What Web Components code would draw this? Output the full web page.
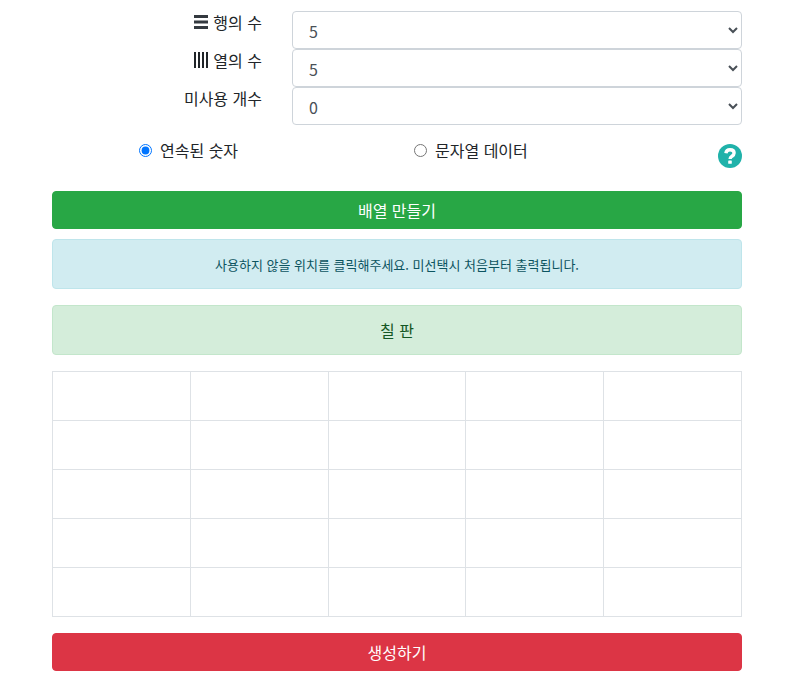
<!DOCTYPE html>
<html lang="ko">
<head>
<meta charset="utf-8">
<title>배열 만들기</title>
<style>
  html, body { margin: 0; background: #fff; }
  body {
    font-family: "Noto Sans CJK KR", "Noto Sans", sans-serif;
    font-size: 16px;
    color: #212529;
  }
</style>
</head>
<body>
<seat-page></seat-page>

<script>
const ICONS = {
  rows: `<svg width="14" height="14" viewBox="0 0 14 14"><path fill="#343a40" d="M0 0h14v3H0zM0 5.5h14v3H0zM0 11h14v3H0z"/></svg>`,
  cols: `<svg width="14" height="16" viewBox="0 0 14 16"><path fill="#212529" d="M0 0h2v16H0zM4 0h2v16H4zM8 0h2v16H8zM12 0h2v16h-2z"/></svg>`,
  help: `<svg width="24" height="24" viewBox="0 0 24 24"><circle cx="12" cy="12" r="12" fill="#20b2aa"/><path fill="none" stroke="#fff" stroke-width="3.4" d="M7.9 9.3c.3-2.300 1.900-3.500 4.100-3.500 2.400 0 4.100 1.300 4.100 3.300 0 1.500-.8 2.300-2.100 3.100-1.200.8-1.900 1.400-1.900 2.900"/><rect x="10.200" y="16.400" width="3.600" height="3.400" rx=".6" fill="#fff"/></svg>`,
};

class FormRow extends HTMLElement {
  constructor() {
    super();
    const root = this.attachShadow({ mode: 'open' });
    const value = this.getAttribute('value') || '0';
    root.innerHTML = `
      <style>
        :host { display: grid; grid-template-columns: 210px 450px; column-gap: 30px; }
        .label {
          display: flex; justify-content: flex-end; align-items: center; gap: 5px;
          height: 22px; margin-top: 0; line-height: 22px;
        }
        select {
          display: block; width: 100%; height: 38px; box-sizing: border-box;
          padding: 6px 12px; font: inherit; color: #495057; background: #fff;
          border: 1px solid #ced4da; border-radius: 4px;
        }
      </style>
      <div class="label"><slot name="icon"></slot><slot></slot></div>
      <select aria-label="${this.textContent.trim()}"><option>${value}</option></select>
    `;
  }
}

class RadioOption extends HTMLElement {
  constructor() {
    super();
    const root = this.attachShadow({ mode: 'open' });
    const checked = this.hasAttribute('checked') ? 'checked' : '';
    root.innerHTML = `
      <style>
        :host { display: flex; align-items: center; height: 24px; }
        input { width: 13px; height: 13px; margin: 0 8px 0 0; flex: none; }
      </style>
      <input type="radio" name="kind" ${checked}><slot></slot>
    `;
  }
}

class AlertBox extends HTMLElement {
  constructor() {
    super();
    const root = this.attachShadow({ mode: 'open' });
    root.innerHTML = `
      <style>
        :host {
          display: flex; align-items: center; justify-content: center;
          box-sizing: border-box; height: 50px; border: 1px solid transparent; border-radius: 4px;
        }
        :host([kind="info"]) { background: #d1ecf1; border-color: #bee5eb; color: #0c5460; font-size: 13px; }
        :host([kind="success"]) { background: #d4edda; border-color: #c3e6cb; color: #155724; font-size: 16px; }
      </style>
      <slot></slot>
    `;
  }
}

class ActionButton extends HTMLElement {
  constructor() {
    super();
    const root = this.attachShadow({ mode: 'open' });
    root.innerHTML = `
      <style>
        :host { display: block; }
        button {
          display: block; width: 100%; height: 38px; padding: 0; border: 1px solid transparent;
          border-radius: 4px; font: inherit; color: #fff;
        }
        :host([kind="success"]) button { background: #28a745; border-color: #28a745; }
        :host([kind="danger"]) button { background: #dc3545; border-color: #dc3545; }
      </style>
      <button type="button"><slot></slot></button>
    `;
  }
}

class SeatGrid extends HTMLElement {
  constructor() {
    super();
    const root = this.attachShadow({ mode: 'open' });
    const rows = Number(this.getAttribute('rows'));
    const cols = Number(this.getAttribute('cols'));
    const row = `<tr>${'<td></td>'.repeat(cols)}</tr>`;
    root.innerHTML = `
      <style>
        :host { display: block; }
        table { width: 690px; border-collapse: collapse; table-layout: fixed; }
        td { height: 49px; box-sizing: border-box; padding: 0; border: 1px solid #dee2e6; }
      </style>
      <table>${row.repeat(rows)}</table>
    `;
  }
}

class SeatPage extends HTMLElement {
  constructor() {
    super();
    const root = this.attachShadow({ mode: 'open' });
    root.innerHTML = `
      <style>
        :host { display: block; width: 690px; margin-left: 52px; padding-top: 11px; }
        .radios { display: grid; grid-template-columns: 275px 308px 1fr; margin: 13px 0 0 87px; height: 40px; align-items: start; }
        .help { width: 24px; height: 24px; margin: 6px 0 0 -4px; display: block; }
        .stack-1 { margin-top: 13px; }
        .gap-10 { margin-top: 10px; }
        .gap-16 { margin-top: 16px; }
        svg { display: block; }
      </style>
      <form-row value="5"><span slot="icon">${ICONS.rows}</span>행의 수</form-row>
      <form-row value="5"><span slot="icon">${ICONS.cols}</span>열의 수</form-row>
      <form-row value="0">미사용 개수</form-row>
      <div class="radios">
        <radio-option checked>연속된 숫자</radio-option>
        <radio-option>문자열 데이터</radio-option>
        <span class="help">${ICONS.help}</span>
      </div>
      <action-button class="stack-1" kind="success">배열 만들기</action-button>
      <alert-box class="gap-10" kind="info">사용하지 않을 위치를 클릭해주세요. 미선택시 처음부터 출력됩니다.</alert-box>
      <alert-box class="gap-16" kind="success">칠 판</alert-box>
      <seat-grid class="gap-16" rows="5" cols="5"></seat-grid>
      <action-button class="gap-16" kind="danger">생성하기</action-button>
    `;
  }
}

customElements.define('form-row', FormRow);
customElements.define('radio-option', RadioOption);
customElements.define('alert-box', AlertBox);
customElements.define('action-button', ActionButton);
customElements.define('seat-grid', SeatGrid);
customElements.define('seat-page', SeatPage);
</script>
</body>
</html>
